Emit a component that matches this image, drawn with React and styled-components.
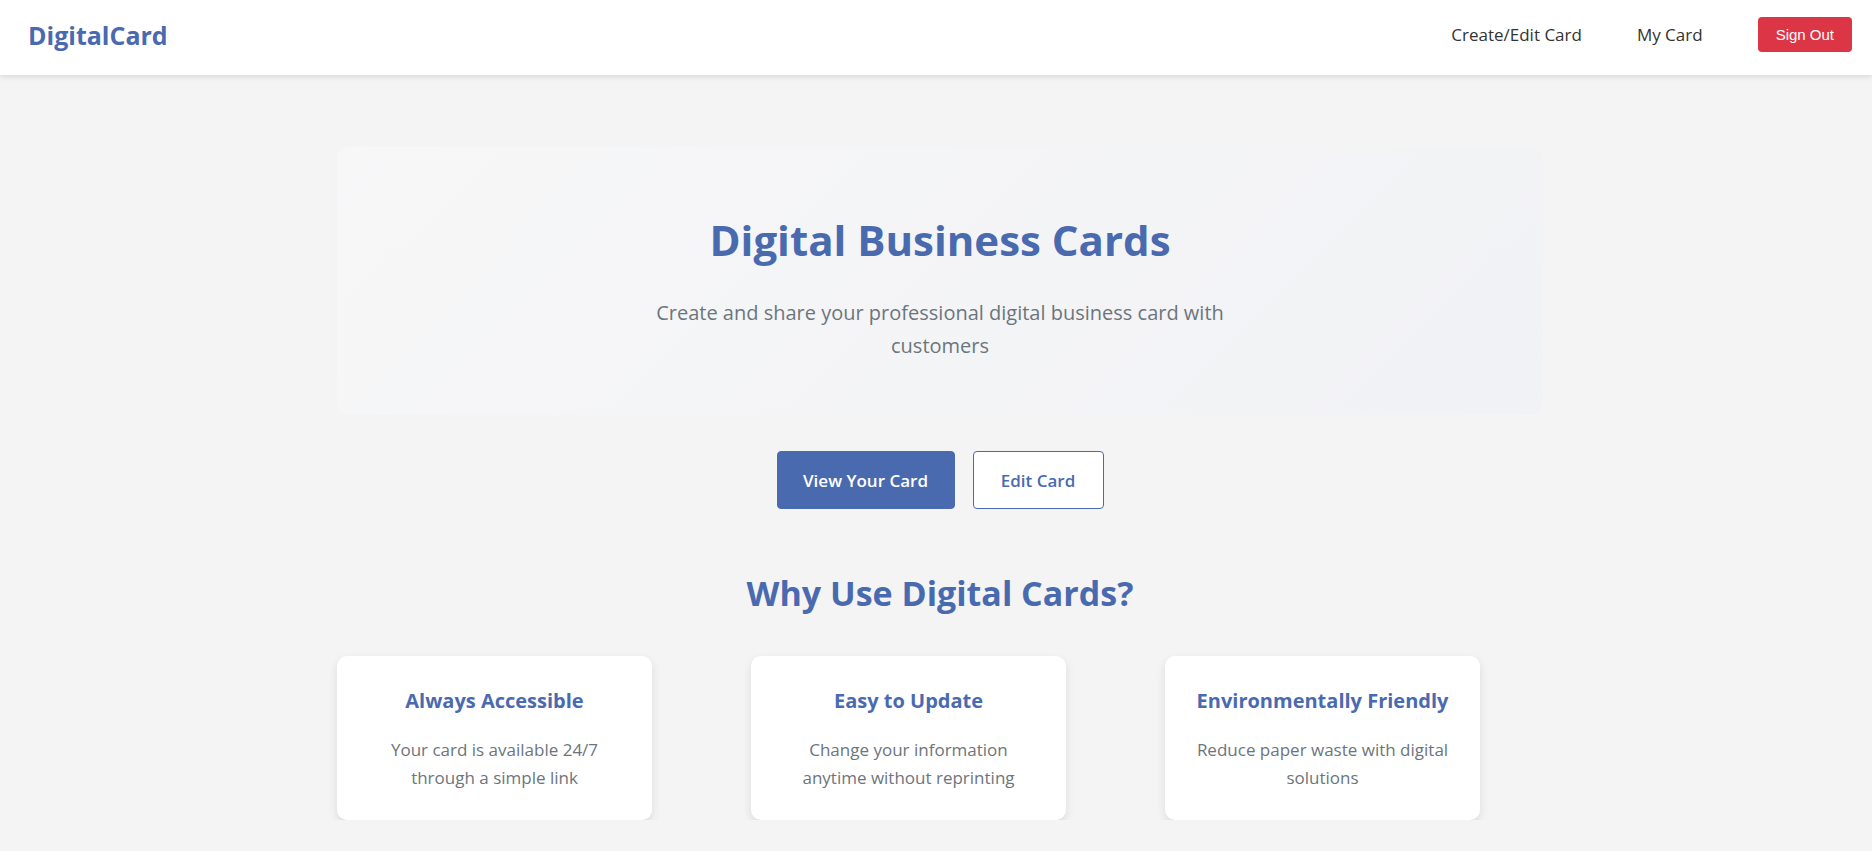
import React from 'react';
import styled, { createGlobalStyle } from 'styled-components';

const GlobalStyle = createGlobalStyle`
    body {
        margin: 0;
        background: #f4f4f4;
        font-family: "Open Sans", "Noto Sans", sans-serif;
    }
`;

const Blue = '#4a6ab0';

const NavBar = styled.nav`
    height: 75px;
    background: #fff;
    box-shadow: 0 2px 5px rgba(0, 0, 0, 0.1);
    display: flex;
    align-items: center;
    justify-content: space-between;
    padding: 0 20px 0 28px;
    box-sizing: border-box;
    position: relative;
`;

const Logo = styled.div`
    font-size: 25px;
    font-weight: 700;
    color: ${Blue};
    margin-top: -5px;
`;

const NavLinks = styled.div`
    display: flex;
    align-items: center;
    gap: 55px;
    margin-top: -6px;
`;

const NavLink = styled.a`
    font-size: 17px;
    color: #333;
    text-decoration: none;
    cursor: pointer;
`;

const SignOut = styled.button`
    font-family: "Liberation Sans", Arial, sans-serif;
    font-size: 15px;
    color: #fff;
    background: #dc3545;
    border: none;
    border-radius: 4px;
    height: 35px;
    padding: 0 18px;
    cursor: pointer;
`;

const Main = styled.main`
    padding-left: 8px;
`;

const Container = styled.div`
    width: 1206px;
    margin: 0 auto;
    display: flex;
    flex-direction: column;
    align-items: center;
`;

const Hero = styled.section`
    width: 100%;
    box-sizing: border-box;
    margin-top: 72px;
    height: 268px;
    padding-top: 67px;
    border-radius: 12px;
    background: linear-gradient(135deg, #f7f7f8 0%, #f1f2f5 100%);
    text-align: center;
`;

const Title = styled.h1`
    margin: 0 0 30px;
    font-size: 42px;
    line-height: 52px;
    font-weight: 700;
    color: ${Blue};
`;

const Subtitle = styled.p`
    margin: 0 auto;
    max-width: 600px;
    font-size: 20px;
    line-height: 33px;
    color: #6c757d;
`;

const Actions = styled.div`
    display: flex;
    gap: 18px;
    margin-top: 36px;
`;

const Button = styled.button`
    font-family: inherit;
    font-size: 17px;
    font-weight: 600;
    height: 58px;
    width: ${p => p.$width}px;
    border-radius: 4px;
    cursor: pointer;
    border: 1px solid ${Blue};
    background: ${p => (p.$primary ? Blue : '#fff')};
    color: ${p => (p.$primary ? '#fff' : Blue)};
`;

const SectionTitle = styled.h2`
    margin: 63px 0 42px;
    font-size: 34px;
    line-height: 42px;
    font-weight: 700;
    color: ${Blue};
`;

const Features = styled.div`
    align-self: stretch;
    display: grid;
    grid-template-columns: repeat(3, 315px);
    column-gap: 99px;
`;

const FeatureCard = styled.div`
    background: #fff;
    border-radius: 10px;
    box-shadow: 0 4px 10px rgba(0, 0, 0, 0.1);
    height: 164px;
    box-sizing: border-box;
    padding: 32px 30px 28px;
    text-align: center;
`;

const FeatureTitle = styled.h3`
    margin: 0 0 22px;
    font-size: 20px;
    line-height: 26px;
    font-weight: 700;
    color: ${Blue};
`;

const FeatureText = styled.p`
    margin: 0;
    font-size: 17px;
    line-height: 28px;
    color: #6c757d;
`;

const features = [
    { title: 'Always Accessible', text: 'Your card is available 24/7 through a simple link' },
    { title: 'Easy to Update', text: 'Change your information anytime without reprinting' },
    { title: 'Environmentally Friendly', text: 'Reduce paper waste with digital solutions' }
];

export default function App() {
    return (
        <>
            <GlobalStyle />
            <NavBar>
                <Logo>DigitalCard</Logo>
                <NavLinks>
                    <NavLink>Create/Edit Card</NavLink>
                    <NavLink>My Card</NavLink>
                    <SignOut>Sign Out</SignOut>
                </NavLinks>
            </NavBar>
            <Main>
                <Container>
                    <Hero>
                        <Title>Digital Business Cards</Title>
                        <Subtitle>Create and share your professional digital business card with customers</Subtitle>
                    </Hero>
                    <Actions>
                        <Button $primary $width={178}>View Your Card</Button>
                        <Button $width={131}>Edit Card</Button>
                    </Actions>
                    <SectionTitle>Why Use Digital Cards?</SectionTitle>
                    <Features>
                        {features.map(f => (
                            <FeatureCard key={f.title}>
                                <FeatureTitle>{f.title}</FeatureTitle>
                                <FeatureText>{f.text}</FeatureText>
                            </FeatureCard>
                        ))}
                    </Features>
                </Container>
            </Main>
        </>
    );
}
